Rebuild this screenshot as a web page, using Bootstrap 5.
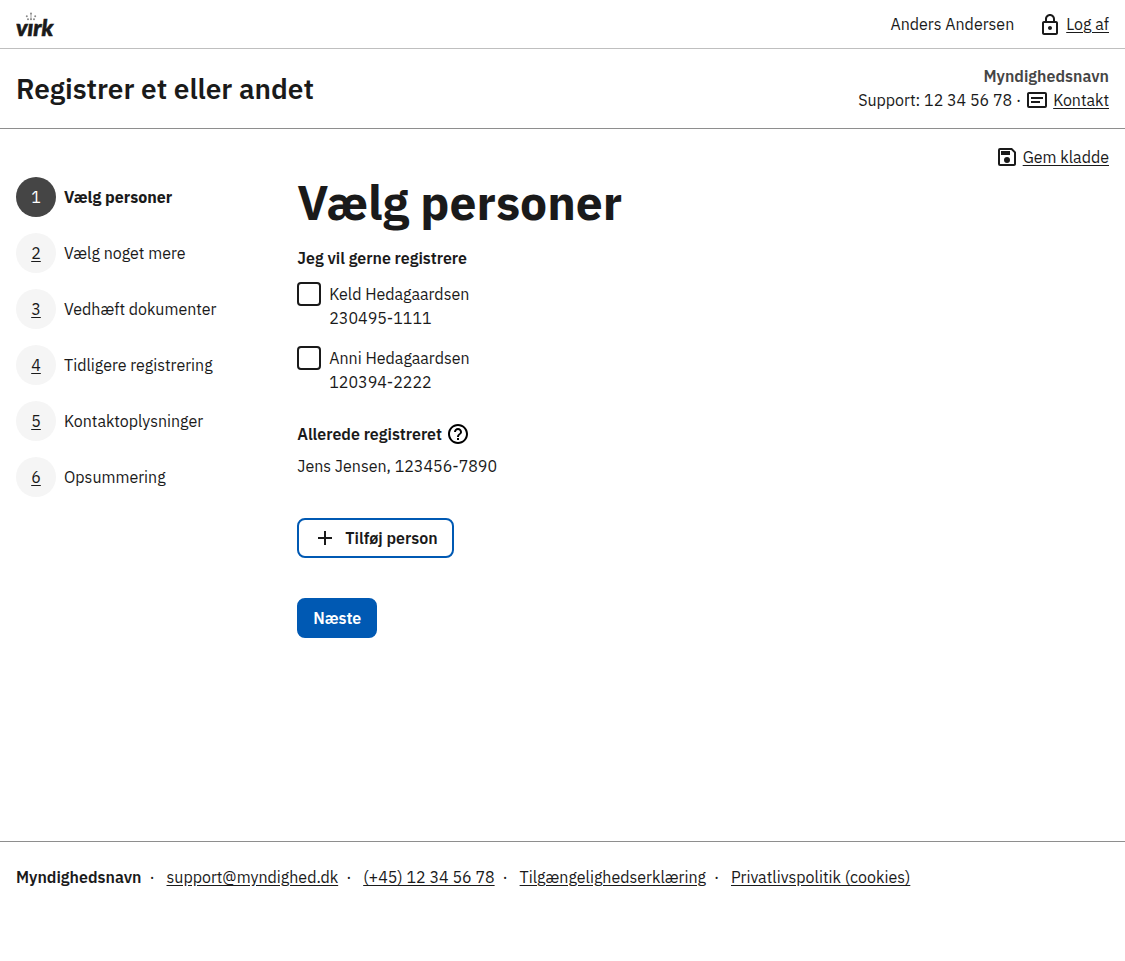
<!DOCTYPE html>
<html lang="da">
<head>
<meta charset="utf-8">
<meta name="viewport" content="width=device-width, initial-scale=1">
<title>Vælg personer – Registrer et eller andet</title>
<link href="https://cdn.jsdelivr.net/npm/bootstrap@5.3.0/dist/css/bootstrap.min.css" rel="stylesheet">
<style>
  body { font-family: "IBM Plex Sans", Roboto, sans-serif; font-size: 16px; line-height: 24px; color: #1a1a1a; background: #fff; }
  a { color: inherit; text-underline-offset: 2px; }
  a:hover { color: #454545; }
  .page-x { padding-left: 16px; padding-right: 16px; }
  .portal-bar { min-height: 49px; border-bottom: 1px solid #bfbfbf; }
  .solution-bar { padding-top: 15px; padding-bottom: 14px; border-bottom: 1px solid #8e8e8e; }
  .solution-title { font-size: 28px; line-height: 50px; font-weight: 600; }
  .authority { font-weight: 600; color: #454545; }
  .icon { width: 24px; height: 24px; flex: none; fill: currentColor; }
  .layout-row { --bs-gutter-x: 32px; }
  .step { gap: 8px; text-decoration: none; }
  .step-no { width: 40px; height: 40px; background: #f5f5f5; text-decoration: underline; text-underline-offset: 2px; }
  .step.active .step-no { background: #454545; color: #fff; text-decoration: none; }
  .step.active { font-weight: 700; }
  .step.active .step-no { font-weight: 400; }
  h1 { font-size: 48px; line-height: 50px; font-weight: 700; margin-bottom: 19px; }
  .heading { font-size: 16px; line-height: 24px; font-weight: 600; }
  legend.heading { margin-bottom: 12px; }
  .person { padding: 0; min-height: 0; display: flex; gap: 8px; margin: 0; }
  .person .form-check-input { float: none; flex: none; margin: 0; width: 24px; height: 24px; border: 2px solid #1a1a1a; border-radius: 4px; }
  .already { margin-top: 28px; margin-bottom: 40px; }
  .btn { font-size: 16px; line-height: 24px; font-weight: 600; border-width: 2px; border-radius: 8px; padding: 6px 14px; }
  .btn-next { --bs-btn-color: #fff; --bs-btn-bg: #0059b3; --bs-btn-border-color: #0059b3; --bs-btn-hover-color: #fff; --bs-btn-hover-bg: #004993; }
  .btn-add { --bs-btn-color: #1a1a1a; --bs-btn-bg: #fff; --bs-btn-border-color: #0059b3; --bs-btn-hover-bg: #f5f5f5; gap: 8px; margin-bottom: 40px; }
  .site-footer { border-top: 1px solid #8e8e8e; padding-top: 23px; padding-bottom: 72px; }
  .footer-owner { font-weight: 600; }
  .footer-links li + li::before { content: "·"; display: inline-block; width: 25px; padding-left: 8px; }
</style>
</head>
<body class="d-flex flex-column min-vh-100">
  <header>
    <div class="portal-bar page-x d-flex justify-content-between align-items-center">
      <a href="#" aria-label="virk" class="d-block text-decoration-none">
        <svg class="d-block" width="48" height="32" viewBox="0 0 48 32">
          <g fill="#8a8a8a">
            <circle cx="15" cy="5.500" r="1"/><rect x="14.600" y="6" width=".8" height="5"/>
            <circle cx="10.800" cy="8.300" r="1"/><circle cx="19.200" cy="8.300" r="1"/>
            <circle cx="12" cy="11.300" r="1"/><circle cx="15" cy="11.300" r="1"/><circle cx="18" cy="11.300" r="1"/>
          </g>
          <text x="0" y="28" font-family="Lato, sans-serif" font-size="23" font-weight="900" font-style="italic" fill="#1a1a1a" stroke="#1a1a1a" stroke-width=".6">vırk</text>
        </svg>
      </a>
      <div class="d-flex align-items-center gap-4">
        <span>Anders Andersen</span>
        <span class="d-flex gap-1">
          <svg class="icon" viewBox="0 -1 24 24"><path d="M18 8h-1V6c0-2.760-2.240-5-5-5S7 3.240 7 6v2H6c-1.100 0-2 .9-2 2v10c0 1.100.9 2 2 2h12c1.100 0 2-.9 2-2V10c0-1.100-.9-2-2-2zM9 6c0-1.660 1.340-3 3-3s3 1.340 3 3v2H9V6zm9 14H6V10h12v10zm-6-3c1.100 0 2-.9 2-2s-.9-2-2-2-2 .9-2 2 .9 2 2 2z"/></svg>
          <a href="#">Log af</a>
        </span>
      </div>
    </div>
    <div class="solution-bar page-x d-flex justify-content-between align-items-start">
      <div class="solution-title">Registrer et eller andet</div>
      <div class="text-end">
        <div class="authority">Myndighedsnavn</div>
        <div class="d-flex gap-1">
          <span>Support: 12 34 56 78 ·</span>
          <svg class="icon" viewBox="0 0 24 24"><path fill-rule="evenodd" d="M4 4h16a2 2 0 0 1 2 2v12a2 2 0 0 1-2 2H4a2 2 0 0 1-2-2V6c0-1.100.9-2 2-2zm0 2v12h16V6H4zm2 3h12v2H6V9zm0 4h9v2H6v-2z"/></svg>
          <a href="#">Kontakt</a>
        </div>
      </div>
    </div>
  </header>

  <main class="page-x flex-grow-1 pt-3 pb-5">
    <div class="d-flex justify-content-end gap-1 mb-2">
      <svg class="icon" viewBox="0 0 24 24"><path fill-rule="evenodd" d="M17 3H5a2 2 0 0 0-2 2v14a2 2 0 0 0 2 2h14c1.100 0 2-.9 2-2V7l-4-4zm2 16H5V5h11.170L19 7.830V19zM12 12a3 3 0 1 0 0 6 3 3 0 0 0 0-6zM6 6h9v4H6V6z"/></svg>
      <a href="#">Gem kladde</a>
    </div>
    <div class="row layout-row">
      <nav class="col-3" aria-label="Trin">
        <ol class="list-unstyled d-flex flex-column gap-3 mb-0">
          <li><a href="#" class="step active d-flex align-items-center" aria-current="step"><span class="step-no rounded-circle d-flex align-items-center justify-content-center">1</span>Vælg personer</a></li>
          <li><a href="#" class="step d-flex align-items-center"><span class="step-no rounded-circle d-flex align-items-center justify-content-center">2</span>Vælg noget mere</a></li>
          <li><a href="#" class="step d-flex align-items-center"><span class="step-no rounded-circle d-flex align-items-center justify-content-center">3</span>Vedhæft dokumenter</a></li>
          <li><a href="#" class="step d-flex align-items-center"><span class="step-no rounded-circle d-flex align-items-center justify-content-center">4</span>Tidligere registrering</a></li>
          <li><a href="#" class="step d-flex align-items-center"><span class="step-no rounded-circle d-flex align-items-center justify-content-center">5</span>Kontaktoplysninger</a></li>
          <li><a href="#" class="step d-flex align-items-center"><span class="step-no rounded-circle d-flex align-items-center justify-content-center">6</span>Opsummering</a></li>
        </ol>
      </nav>
      <form class="col-9">
        <h1>Vælg personer</h1>
        <fieldset class="d-flex flex-column gap-3">
          <legend class="heading p-0 float-none">Jeg vil gerne registrere</legend>
          <div class="form-check person">
            <input class="form-check-input" type="checkbox" id="keld">
            <label class="form-check-label" for="keld">Keld Hedagaardsen<br>230495-1111</label>
          </div>
          <div class="form-check person">
            <input class="form-check-input" type="checkbox" id="anni">
            <label class="form-check-label" for="anni">Anni Hedagaardsen<br>120394-2222</label>
          </div>
        </fieldset>
        <div class="already">
          <div class="d-flex align-items-center gap-1 mb-2">
            <h2 class="heading mb-0">Allerede registreret</h2>
            <button type="button" class="border-0 bg-transparent p-0 d-flex" aria-label="Hjælp">
              <svg class="icon" viewBox="0 0 24 24"><path d="M11 18h2v-2h-2v2zm1-16C6.480 2 2 6.480 2 12s4.480 10 10 10 10-4.480 10-10S17.520 2 12 2zm0 18c-4.410 0-8-3.590-8-8s3.590-8 8-8 8 3.590 8 8-3.590 8-8 8zm0-14c-2.210 0-4 1.790-4 4h2c0-1.100.9-2 2-2s2 .9 2 2c0 2-3 1.750-3 5h2c0-2.250 3-2.500 3-5 0-2.210-1.790-4-4-4z"/></svg>
            </button>
          </div>
          <p class="mb-0">Jens Jensen, 123456-7890</p>
        </div>
        <button type="button" class="btn btn-add d-flex align-items-center">
          <svg class="icon" viewBox="0 0 24 24"><path d="M19 13h-6v6h-2v-6H5v-2h6V5h2v6h6v2z"/></svg>Tilføj person
        </button>
        <button type="submit" class="btn btn-next">Næste</button>
      </form>
    </div>
  </main>

  <footer class="site-footer page-x">
    <ul class="footer-links list-unstyled d-flex flex-wrap mb-0">
      <li class="footer-owner">Myndighedsnavn</li>
      <li><a href="#">support@myndighed.dk</a></li>
      <li><a href="#">(+45) 12 34 56 78</a></li>
      <li><a href="#">Tilgængelighedserklæring</a></li>
      <li><a href="#">Privatlivspolitik (cookies)</a></li>
    </ul>
  </footer>
<script src="https://cdn.jsdelivr.net/npm/bootstrap@5.3.0/dist/js/bootstrap.bundle.min.js"></script>
</body>
</html>
